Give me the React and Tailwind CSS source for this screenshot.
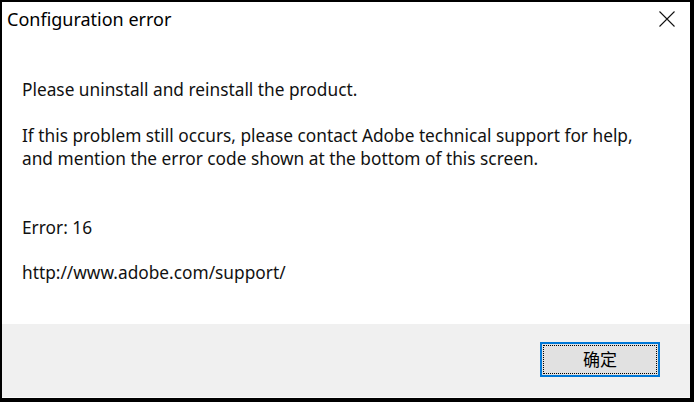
export default function App() {
  return (
    <div
      className="w-[694px] h-[402px] bg-black pt-[2px] pl-[2px] pr-[4px] pb-[4px]"
      style={{ fontFamily: '"Noto Sans", "Noto Sans CJK SC", sans-serif' }}
    >
      <div className="flex flex-col h-full bg-white">
        {/* title bar */}
        <div className="flex items-center justify-between h-[34px] pl-[5px] pr-[15px]">
          <span className="text-[18px] text-black leading-none">Configuration error</span>
          <svg width="16" height="16" viewBox="0 0 16 16" className="mt-[-1px]">
            <path d="M0.5 0.5L15.5 15.5M15.5 0.5L0.5 15.5" stroke="#111" strokeWidth="1.1" />
          </svg>
        </div>

        {/* message */}
        <div className="flex-1 pl-[20px] pt-[42px] text-[17.3px] leading-[23px] text-[#111]">
          <p>Please uninstall and reinstall the product.</p>
          <p className="mt-[23px]">
            If this problem still occurs, please contact Adobe technical support for help,
            <br />
            and mention the error code shown at the bottom of this screen.
          </p>
          <p className="mt-[46px]">Error: 16</p>
          <p className="mt-[22px]">http://www.adobe.com/support/</p>
        </div>

        {/* footer */}
        <div className="h-[74px] bg-[#f0f0f0] flex justify-end items-start pt-[18px] pr-[30px] border-b-[1px] border-[#fafafa]">
          <button className="w-[120px] h-[35px] border-2 border-[#0078d7] bg-[#e1e1e1] p-[1px]">
            <div className="h-full w-full border border-dotted border-black flex items-center justify-center text-[17px] text-black">
              确定
            </div>
          </button>
        </div>
      </div>
    </div>
  );
}
